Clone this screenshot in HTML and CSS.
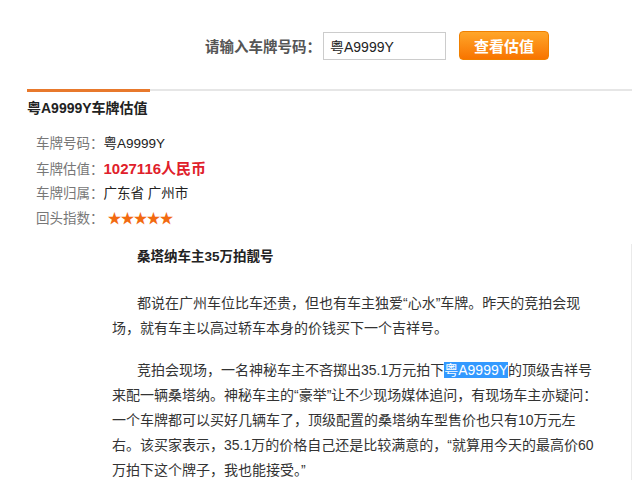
FILE: index.html
```html
<!DOCTYPE html>
<html lang="zh-CN">
<head>
  <meta charset="UTF-8" />
  <title>车牌估值</title>
  <link rel="stylesheet" href="styles.css">
</head>
<body>
  <div class="search">
    <label class="search-label" for="plate">请输入车牌号码：</label>
    <input class="search-input" id="plate" type="text" value="粤A9999Y">
    <button class="search-btn">查看估值</button>
  </div>

  <div class="panel">
    <div class="panel-head">
      <h2 class="panel-title">粤A9999Y车牌估值</h2>
    </div>
    <ul class="info">
      <li><span class="info-label">车牌号码：</span><span class="plate">粤A9999Y</span></li>
      <li><span class="info-label">车牌估值：</span><strong class="price">1027116人民币</strong></li>
      <li><span class="info-label">车牌归属：</span>广东省 广州市</li>
      <li><span class="info-label">回头指数：</span><span class="stars">★★★★★</span></li>
    </ul>

    <div class="article">
      <h3 class="article-title">桑塔纳车主35万拍靓号</h3>
      <p>都说在广州车位比车还贵，但也有车主独爱“心水”车牌。昨天的竞拍会现场，就有车主以高过轿车本身的价钱买下一个吉祥号。</p>
      <p>竞拍会现场，一名神秘车主不吝掷出35.1万元拍下<span class="hl">粤A9999Y</span>的顶级吉祥号来配一辆桑塔纳。神秘车主的“豪举”让不少现场媒体追问，有现场车主亦疑问：一个车牌都可以买好几辆车了，顶级配置的桑塔纳车型售价也只有10万元左右。该买家表示，35.1万的价格自己还是比较满意的，“就算用今天的最高价60万拍下这个牌子，我也能接受。”</p>
    </div>
  </div>
</body>
</html>
```

FILE: styles.css
```css
* {
  box-sizing: border-box;
}

body {
  margin: 0;
  font-family: 'Liberation Sans', 'Noto Sans CJK SC', sans-serif;
  background: #fff;
  color: #333;
  font-size: 14px;
}

.search {
  display: flex;
  align-items: center;
  padding: 31px 0 0 205px;
  height: 60px;
}

.search-label {
  font-size: 14.5px;
  font-weight: bold;
  color: #555;
  margin-right: 2px;
}

.search-input {
  width: 123px;
  height: 28px;
  border: 1px solid #ccc;
  padding: 0 6px;
  font-family: inherit;
  font-size: 14px;
  color: #222;
}

.search-btn {
  margin-left: 13px;
  width: 90px;
  height: 29px;
  border: 1px solid #f08000;
  border-radius: 4px;
  background: linear-gradient(#ffa62a, #f87400);
  color: #fff;
  font-family: inherit;
  font-size: 15px;
  font-weight: bold;
  cursor: pointer;
}

.panel {
  margin: 29px 0 0 27px;
  width: 605px;
}

.panel-head {
  border-top: 2px solid #e6e6e6;
}

.panel-title {
  display: inline-block;
  width: 123px;
  margin: -2px 0 0;
  padding-top: 6px;
  border-top: 3px solid #e8792c;
  font-size: 14px;
  color: #222;
  line-height: 20px;
  white-space: nowrap;
}

.info {
  list-style: none;
  margin: 13px 0 0;
  padding: 0 0 0 9px;
  color: #222;
}

.info li {
  height: 25px;
  line-height: 25px;
  font-size: 13.5px;
}

.info-label {
  color: #777;
}

.price {
  color: #e0202a;
  font-size: 15px;
}

.stars {
  margin-left: 4px;
  color: #f26a10;
  font-size: 14px;
  letter-spacing: -1px;
}

.article {
  margin: 13px 0 0 85px;
  border-right: 1px solid #eaeaea;
  font-size: 14px;
  color: #333;
}

.article-title {
  margin: 0 0 21px 25px;
  font-size: 13.5px;
  line-height: 26px;
  color: #222;
}

.article p {
  width: 488px;
  margin: 0 0 17px;
  line-height: 25px;
  text-indent: 25px;
}

.hl {
  background: #3399ff;
  color: #fff;
}
```
